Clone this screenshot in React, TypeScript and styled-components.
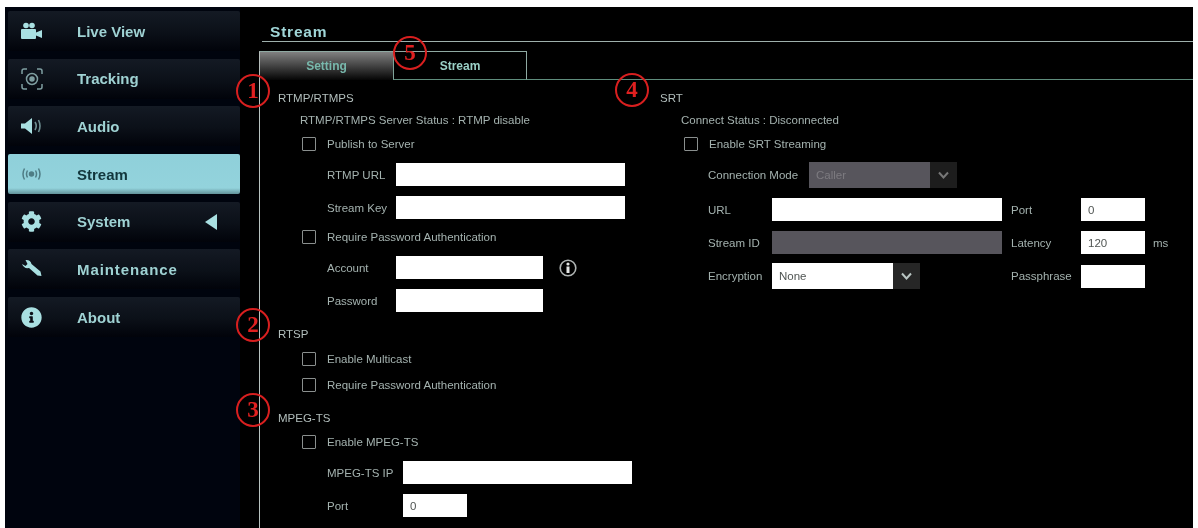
import React from "react";
import styled, { createGlobalStyle } from "styled-components";
import { FaCog, FaInfoCircle } from "react-icons/fa";

const Global = createGlobalStyle`
  html, body { margin: 0; padding: 0; background: #fff; }
  body { width: 1198px; height: 528px; overflow: hidden; font-family: "Liberation Sans", Arial, sans-serif; }
`;

const Frame = styled.div`
  position: relative;
  width: 1198px;
  height: 528px;
  box-sizing: border-box;
  padding: 7px 5px 0 5px;
  background: #fff;
  overflow: hidden;
  filter: blur(0.7px);
`;

const Screen = styled.div`
  display: flex;
  height: 521px;
  background: #000;
`;

const Sidebar = styled.nav`
  width: 235px;
  flex: none;
  box-sizing: border-box;
  padding: 4px 0 0 3px;
  background: #00040e;
  display: flex;
  flex-direction: column;
  gap: 7.7px;
`;

const NavItem = styled.div<{ $active?: boolean }>`
  width: 232px;
  height: 40px;
  box-sizing: border-box;
  display: flex;
  align-items: center;
  border-radius: 2px;
  color: ${(p) => (p.$active ? "#12363c" : "#9fd2d3")};
  background: ${(p) =>
    p.$active
      ? "linear-gradient(180deg, #8fd0da 0%, #93d3dc 85%, #62929a 100%)"
      : "linear-gradient(180deg, #141a24 0%, #0b1018 55%, #01030a 100%)"};
`;

const NavIcon = styled.span`
  width: 69px;
  flex: none;
  box-sizing: border-box;
  padding-left: 13px;
  display: flex;
  align-items: center;
  font-size: 20px;
  color: #a9e0e2;
`;

const NavLabel = styled.span<{ $wide?: boolean }>`
  flex: 1;
  font-size: 15px;
  font-weight: 700;
  letter-spacing: ${(p) => (p.$wide ? "0.9px" : "0")};
`;

const NavArrow = styled.span`
  width: 0;
  height: 0;
  margin-right: 23px;
  border-top: 8px solid transparent;
  border-bottom: 8px solid transparent;
  border-right: 12px solid #a9e0e2;
`;

const Main = styled.main`
  flex: 1;
  min-width: 0;
  display: flex;
  flex-direction: column;
  padding-left: 19px;
`;

const TitleBar = styled.h1`
  margin: 0 0 0 3px;
  height: 35px;
  box-sizing: border-box;
  padding: 16px 0 0 8px;
  font-size: 15.5px;
  line-height: 18px;
  font-weight: 700;
  letter-spacing: 0.8px;
  color: #a0d6d8;
  border-bottom: 1px solid #9eb0ac;
`;

const Tabs = styled.div`
  display: flex;
  margin-top: 9px;
  height: 29px;
  box-sizing: border-box;
`;

const Tab = styled.div<{ $active?: boolean }>`
  width: 134px;
  box-sizing: border-box;
  display: flex;
  align-items: center;
  justify-content: center;
  font-size: 12px;
  font-weight: 700;
  color: ${(p) => (p.$active ? "#78b8ac" : "#9ad0c6")};
  border-top: 1px solid #8fa9a2;
  border-right: ${(p) => (p.$active ? "none" : "1px solid #8fa9a2")};
  border-bottom: ${(p) => (p.$active ? "none" : "1px solid #5f8d7d")};
  background: ${(p) => (p.$active ? "linear-gradient(180deg, #808080, #3c3c3c 55%, #050505)" : "#000")};
  border-left: 1px solid ${(p) => (p.$active ? "#b5bdbb" : "#7fa399")};
`;

const TabRest = styled.div`
  flex: 1;
  border-bottom: 1px solid #5f8d7d;
`;

const Content = styled.div`
  flex: 1;
  display: flex;
  border-left: 1px solid #b8c2c0;
  padding-top: 8px;
`;

const LeftCol = styled.div`
  width: 400px;
  flex: none;
  display: flex;
  flex-direction: column;
`;

const RightCol = styled.div`
  flex: 1;
  display: flex;
  flex-direction: column;
`;

const Row = styled.div<{ $h: number; $top?: number; $indent?: number }>`
  height: ${(p) => p.$h}px;
  margin-top: ${(p) => p.$top ?? 0}px;
  padding-left: ${(p) => p.$indent ?? 0}px;
  display: flex;
  align-items: center;
  flex: none;
  font-size: 11.5px;
  color: #a4b2af;
  white-space: nowrap;
`;

const SectionTitle = styled(Row)`
  color: #b2bebc;
`;

const Check = styled.span`
  width: 12px;
  height: 12px;
  flex: none;
  margin-right: 11px;
  border: 1px solid #8a8f8e;
  border-radius: 1px;
`;

const FieldLabel = styled.span<{ $w: number }>`
  width: ${(p) => p.$w}px;
  flex: none;
`;

const SideLabel = styled.span`
  width: 79px;
  flex: none;
  box-sizing: border-box;
  padding-left: 9px;
`;

const Field = styled.div<{ $w: number; $disabled?: boolean }>`
  width: ${(p) => p.$w}px;
  height: 23px;
  flex: none;
  box-sizing: border-box;
  padding-left: 7px;
  display: flex;
  align-items: center;
  font-size: 11.5px;
  color: ${(p) => (p.$disabled ? "#7d7b80" : "#505553")};
  background: ${(p) => (p.$disabled ? "#57555c" : "#fff")};
`;

const SelectBox = styled.div`
  display: flex;
  height: 26px;
  flex: none;
`;

const SelectField = styled(Field)`
  height: 26px;
`;

const SelectArrow = styled.span<{ $dim?: boolean }>`
  width: 27px;
  display: flex;
  align-items: center;
  justify-content: center;
  background: ${(p) => (p.$dim ? "#1d1d1d" : "#262626")};
  color: ${(p) => (p.$dim ? "#777" : "#b8c4c2")};
`;

const InfoMark = styled.span`
  margin-left: 16px;
  display: flex;
`;

const Unit = styled.span`
  margin-left: 8px;
`;

const Spacer = styled.span`
  width: 82px;
  flex: none;
`;

const Mark = styled.div<{ $x: number; $y: number }>`
  position: absolute;
  left: ${(p) => p.$x - 17}px;
  top: ${(p) => p.$y - 17}px;
  width: 34px;
  height: 34px;
  box-sizing: border-box;
  border: 2px solid #d81f1f;
  border-radius: 50%;
  display: flex;
  align-items: center;
  justify-content: center;
  font-family: "Liberation Serif", serif;
  font-size: 23px;
  font-weight: 700;
  color: #e02020;
`;

const Chevron = () => (
  <svg width="11" height="8" viewBox="0 0 11 8" fill="none" stroke="currentColor" strokeWidth="2">
    <path d="M1 1.5 L5.5 6.5 L10 1.5" />
  </svg>
);

const OutlinedInfo = () => (
  <svg width="18" height="18" viewBox="0 0 18 18">
    <circle cx="9" cy="9" r="7.8" fill="none" stroke="#aeb3b2" strokeWidth="1.6" />
    <circle cx="9" cy="5" r="1.6" fill="#e4e6e5" />
    <rect x="7.5" y="7.5" width="3" height="6.5" fill="#e4e6e5" />
  </svg>
);

const CameraIcon = () => (
  <svg width="21" height="18" viewBox="0 0 21 18" fill="currentColor">
    <circle cx="5" cy="3.5" r="2.8" />
    <circle cx="11" cy="3.5" r="2.8" />
    <rect x="0" y="7" width="15" height="10" rx="1" />
    <path d="M15 10.5 L21 8 V16 L15 13.5Z" />
  </svg>
);

const TrackingIcon = () => (
  <svg width="22" height="22" viewBox="0 0 22 22" fill="none" stroke="#7f9ea1" strokeWidth="1.5">
    <path d="M1 6 V3 a2 2 0 0 1 2-2 h3 M16 1 h3 a2 2 0 0 1 2 2 v3 M21 16 v3 a2 2 0 0 1-2 2 h-3 M6 21 H3 a2 2 0 0 1-2-2 v-3" />
    <circle cx="11" cy="11" r="5.5" />
    <circle cx="11" cy="11" r="2" fill="#7f9ea1" />
  </svg>
);

const AudioIcon = () => (
  <svg width="22" height="18" viewBox="0 0 22 18">
    <path d="M0 6.5 H4 L11 1 V17 L4 11.5 H0Z" fill="#a9e0e2" />
    <path d="M14 5 Q16.5 9 14 13 M17.5 3 Q20.5 9 17.5 15" fill="none" stroke="#6f8f92" strokeWidth="1.6" />
  </svg>
);

const BroadcastIcon = () => (
  <svg width="21" height="14" viewBox="0 0 21 14" fill="none" stroke="#4f7d85" strokeWidth="1.5">
    <circle cx="10.5" cy="7" r="2" fill="#4f7d85" />
    <path d="M6.5 3.5 Q4.5 7 6.5 10.5 M3.5 1.5 Q0.5 7 3.5 12.5 M14.5 3.5 Q16.5 7 14.5 10.5 M17.5 1.5 Q20.5 7 17.5 12.5" />
  </svg>
);

const WrenchIcon = () => (
  <svg width="21" height="20" viewBox="0 0 21 20" fill="currentColor">
    <path d="M1 5 L4.5 7 L6.5 5 L4.5 1 Q9.5 0.5 10.5 5 L19.5 12.5 L20.5 17 L16.5 16.5 L8 9 Q3 10 1 5Z" />
  </svg>
);

const nav: { label: string; icon: React.ReactNode; active?: boolean; arrow?: boolean; wide?: boolean }[] = [
  { label: "Live View", icon: <CameraIcon /> },
  { label: "Tracking", icon: <TrackingIcon /> },
  { label: "Audio", icon: <AudioIcon /> },
  { label: "Stream", icon: <BroadcastIcon />, active: true },
  { label: "System", icon: <FaCog size={21} />, arrow: true },
  { label: "Maintenance", icon: <WrenchIcon />, wide: true },
  { label: "About", icon: <FaInfoCircle size={21} /> },
];

const marks: [number, number, string][] = [
  [253, 91, "1"],
  [253, 325, "2"],
  [253, 410, "3"],
  [632, 90, "4"],
  [410, 53, "5"],
];

export default function App() {
  return (
    <>
      <Global />
      <Frame>
        <Screen>
          <Sidebar>
            {nav.map((n) => (
              <NavItem key={n.label} $active={n.active}>
                <NavIcon>{n.icon}</NavIcon>
                <NavLabel $wide={n.wide}>{n.label}</NavLabel>
                {n.arrow && <NavArrow />}
              </NavItem>
            ))}
          </Sidebar>
          <Main>
            <TitleBar>Stream</TitleBar>
            <Tabs>
              <Tab $active>Setting</Tab>
              <Tab>Stream</Tab>
              <TabRest />
            </Tabs>
            <Content>
              <LeftCol>
                <SectionTitle $h={20} $indent={18}>RTMP/RTMPS</SectionTitle>
                <Row $h={22} $top={1} $indent={40}>RTMP/RTMPS Server Status : RTMP disable</Row>
                <Row $h={24} $top={1} $indent={42}><Check />Publish to Server</Row>
                <Row $h={33} $top={2} $indent={67}><FieldLabel $w={69}>RTMP URL</FieldLabel><Field $w={229} /></Row>
                <Row $h={33} $indent={67}><FieldLabel $w={69}>Stream Key</FieldLabel><Field $w={229} /></Row>
                <Row $h={26} $indent={42}><Check />Require Password Authentication</Row>
                <Row $h={33} $top={1} $indent={67}>
                  <FieldLabel $w={69}>Account</FieldLabel>
                  <Field $w={147} />
                  <InfoMark><OutlinedInfo /></InfoMark>
                </Row>
                <Row $h={33} $indent={67}><FieldLabel $w={69}>Password</FieldLabel><Field $w={147} /></Row>
                <SectionTitle $h={24} $top={5} $indent={18}>RTSP</SectionTitle>
                <Row $h={26} $indent={42}><Check />Enable Multicast</Row>
                <Row $h={26} $indent={42}><Check />Require Password Authentication</Row>
                <SectionTitle $h={24} $top={8} $indent={18}>MPEG-TS</SectionTitle>
                <Row $h={24} $indent={42}><Check />Enable MPEG-TS</Row>
                <Row $h={33} $top={2} $indent={67}><FieldLabel $w={76}>MPEG-TS IP</FieldLabel><Field $w={229} /></Row>
                <Row $h={33} $indent={67}><FieldLabel $w={76}>Port</FieldLabel><Field $w={64}>0</Field></Row>
              </LeftCol>
              <RightCol>
                <SectionTitle $h={20}>SRT</SectionTitle>
                <Row $h={22} $top={1} $indent={21}>Connect Status : Disconnected</Row>
                <Row $h={24} $top={1} $indent={24}><Check />Enable SRT Streaming</Row>
                <Row $h={34} $top={2} $indent={48}>
                  <FieldLabel $w={101}>Connection Mode</FieldLabel>
                  <SelectBox>
                    <SelectField $w={121} $disabled>Caller</SelectField>
                    <SelectArrow $dim><Chevron /></SelectArrow>
                  </SelectBox>
                </Row>
                <Row $h={33} $top={1} $indent={48}>
                  <FieldLabel $w={64}>URL</FieldLabel>
                  <Field $w={230} />
                  <SideLabel>Port</SideLabel>
                  <Field $w={64}>0</Field>
                </Row>
                <Row $h={33} $indent={48}>
                  <FieldLabel $w={64}>Stream ID</FieldLabel>
                  <Field $w={230} $disabled />
                  <SideLabel>Latency</SideLabel>
                  <Field $w={64}>120</Field>
                  <Unit>ms</Unit>
                </Row>
                <Row $h={34} $indent={48}>
                  <FieldLabel $w={64}>Encryption</FieldLabel>
                  <SelectBox>
                    <SelectField $w={121}>None</SelectField>
                    <SelectArrow><Chevron /></SelectArrow>
                  </SelectBox>
                  <Spacer />
                  <SideLabel>Passphrase</SideLabel>
                  <Field $w={64} />
                </Row>
              </RightCol>
            </Content>
          </Main>
        </Screen>
        {marks.map(([x, y, t]) => (
          <Mark key={t} $x={x} $y={y}>{t}</Mark>
        ))}
      </Frame>
    </>
  );
}
